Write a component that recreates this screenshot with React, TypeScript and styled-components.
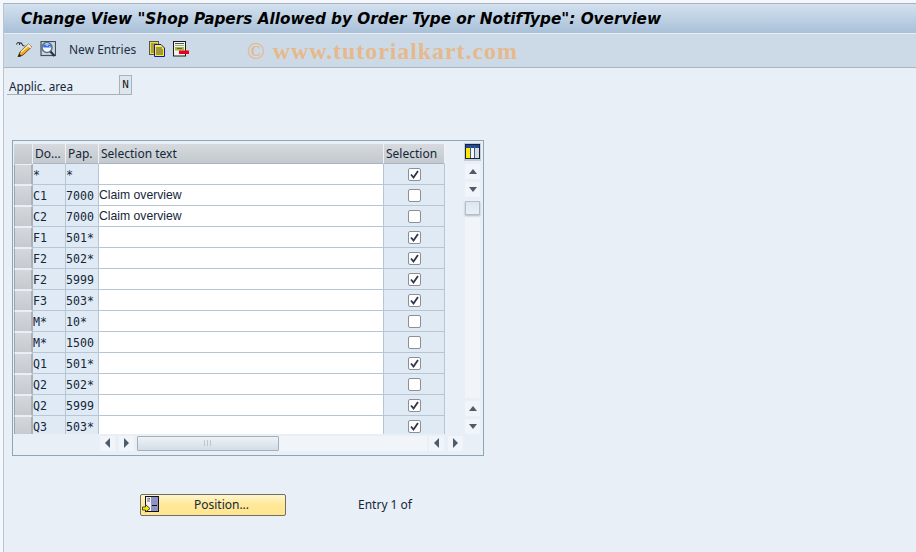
import React from "react";
import styled, { createGlobalStyle } from "styled-components";

const Global = createGlobalStyle`
  html, body { margin: 0; padding: 0; background: #e8eff7; }
  #root { width: 916px; height: 552px; overflow: hidden; }
`;
const uiFont = `"Noto Sans", "Open Sans", sans-serif`;
const monoFont = `"DejaVu Sans Mono", monospace`;

const Page = styled.div`
  width: 916px; height: 552px; box-sizing: border-box; position: relative;
  padding: 3px 0 0 3px; background: #f4f7fb; overflow: hidden;
`;
const Window = styled.div`
  height: 549px; box-sizing: border-box; border-top: 1px solid #a9b2bc; border-left: 1px solid #b9c4cf;
  background: #e8eff7; display: flex; flex-direction: column;
`;
const TitleBar = styled.div`
  height: 30px; box-sizing: border-box; padding: 0 0 0 17px;
  background: linear-gradient(#d3e1ef, #a9c0d8);
  border-bottom: 1px solid #e6edf4;
  display: flex; align-items: center;
`;
const Title = styled.h1`
  margin: 0; font: italic bold 15.28px "DejaVu Sans", sans-serif; color: #000; white-space: nowrap;
`;
const Toolbar = styled.div`
  height: 34px; box-sizing: border-box; background: #ccdae7; border-bottom: 1px solid #a9b5c1;
  display: flex; align-items: center; padding: 0 0 3px 12px; position: relative;
`;
const ToolIcon = styled.span<{ $mr: number }>`
  width: 16px; height: 16px; display: inline-flex; margin-right: ${p => p.$mr}px;
`;
const ToolText = styled.span`
  font: 12px ${uiFont}; color: #1c2e42; margin-right: 13px;
`;
const Watermark = styled.div`
  position: absolute; left: 243px; top: 4px; font: bold 24px "Liberation Serif", serif;
  letter-spacing: 0.92px; color: #e6b98c; white-space: nowrap;
`;
const Body = styled.div`
  flex: 1; display: flex; flex-direction: column; align-items: flex-start; padding: 7px 0 0 3px;
`;
const FieldRow = styled.div`display: flex; height: 20px;`;
const FieldLabel = styled.div`
  width: 112px; box-sizing: border-box; padding: 3px 0 0 2px; border-bottom: 1px solid #a8b0b8;
  font: 11.7px ${uiFont}; color: #14263a;
`;
const FieldValue = styled.div`
  width: 13px; box-sizing: border-box; border: 1px solid #a8b0b8; background: #dde6ee;
  font: 11px ${monoFont}; color: #222; text-align: center; line-height: 18px;
`;
const TableBox = styled.div`
  margin: 45px 0 0 5px; width: 472px; height: 316px; box-sizing: border-box;
  border: 1px solid #8ea5b8; display: grid; grid-template-columns: 449px 19px; grid-template-rows: 290px 21px;
  padding: 3px 0 0 1px; background: #e8eff7;
`;
const Grid = styled.div`
  display: grid; grid-template-columns: 19px 33px 33px 285px 61px; grid-auto-rows: 21px; overflow: hidden;
  width: 431px; align-content: start;
`;
const Corner = styled.div`
  background: linear-gradient(#d2d6da, #c2c7cc); border-right: 1px solid #e8eff7; height: 20px;
`;
const Head = styled.div`
  height: 20px; box-sizing: border-box; background: linear-gradient(#d6dade, #c3c9ce);
  border-right: 1px solid #eef2f6; border-bottom: 1px solid #a8b5c1;
  font: 12px ${uiFont}; color: #14263a; padding-left: 2px; line-height: 20px; white-space: nowrap;
`;
const RowSel = styled.div`
  box-sizing: border-box; background: linear-gradient(#d4d8dc, #c6cacf);
  border: 1px solid #e8eff7; border-left: 1px solid #9aa5b0; border-right: 2px solid #a9b2bb; margin-top: -1px; height: 21px;
`;
const Cell = styled.div<{ $kind: "key" | "text" | "check" }>`
  box-sizing: border-box; height: 21px; overflow: hidden; white-space: nowrap;
  background: ${p => (p.$kind === "text" ? "#ffffff" : "#dfeaf4")};
  border-right: 1px solid #b7c6d4; border-bottom: 1px solid #b7c6d4; margin-top: -1px;
  font: ${p => (p.$kind === "text" ? `12.2px "Liberation Sans", sans-serif` : `11.6px ${monoFont}`)};
  line-height: ${p => (p.$kind === "text" ? 21 : 22)}px; color: #14263a;
  ${p => p.$kind === "check" && "display: flex; align-items: center; justify-content: center;"}
`;
const Check = styled.span`
  width: 13px; height: 13px; box-sizing: border-box; border: 1px solid #8d8f92; border-radius: 2px;
  background: #fff; display: inline-flex; align-items: center; justify-content: center;
`;
const VScroll = styled.div`
  display: flex; flex-direction: column; align-items: center; width: 17px; margin-left: 1px; margin-top: -1px;
`;
const ConfigBtn = styled.div`
  width: 17px; height: 18px; box-sizing: border-box; margin-bottom: 3px; display: flex;
`;
const ArrowBtn = styled.div`
  width: 15px; height: 15px; flex: none; background: #f1f5f9; display: flex; align-items: center; justify-content: center;
`;
const VTrack = styled.div`
  flex: 1; width: 15px; background: #f1f5f9; margin: 3px 0; display: flex; flex-direction: column;
`;
const VThumb = styled.div`
  height: 14px; margin-top: 1px; box-sizing: border-box; border: 1px solid #b1bfcc; background: linear-gradient(#dde6ef, #e9eff5);
  box-shadow: 0 1px 2px #aab6c2;
`;
const Gap = styled.div`height: 3px; flex: none;`;
const HScroll = styled.div`
  display: flex; align-items: center; grid-column: 1 / span 2; padding-left: 86px; height: 18px; gap: 0;
`;
const HTrack = styled.div`
  width: 290px; height: 15px; margin: 0 2px 0 3px; background: #f1f5f9; display: flex;
`;
const HThumb = styled.div`
  width: 142px; height: 15px; box-sizing: border-box; border: 1px solid #a3b0bc; border-radius: 1px;
  background: linear-gradient(#eef2f6, #d3dde6); display: flex; align-items: center; justify-content: center;
`;
const HGap = styled.div`width: 4px; flex: none;`;
const Footer = styled.div`
  display: flex; align-items: center; margin: 38px 0 0 133px;
`;
const PosButton = styled.button`
  width: 146px; height: 22px; box-sizing: border-box; padding: 0; border: 1px solid #6e6e64; border-radius: 2px;
  background: linear-gradient(#fff6cf, #ffe89a 45%, #ffe58f); position: relative; display: block;
  font: 12px ${uiFont}; color: #14263a; text-align: center; padding-left: 17px; line-height: 20px;
`;
const PosIcon = styled.span`position: absolute; left: 1px; top: 0; width: 18px; height: 18px; display: flex;`;
const EntryText = styled.span`font: 12px ${uiFont}; color: #14263a; margin-left: 72px; padding-bottom: 2px;`;

const rows: [string, string, string, boolean][] = [
  ["*", "*", "", true],
  ["C1", "7000", "Claim overview", false],
  ["C2", "7000", "Claim overview", false],
  ["F1", "501*", "", true],
  ["F2", "502*", "", true],
  ["F2", "5999", "", true],
  ["F3", "503*", "", true],
  ["M*", "10*", "", false],
  ["M*", "1500", "", false],
  ["Q1", "501*", "", true],
  ["Q2", "502*", "", false],
  ["Q2", "5999", "", true],
  ["Q3", "503*", "", true],
];

const Tick = () => (
  <svg width="11" height="11" viewBox="0 0 11 11"><path d="M2 5.5 L4.5 8.5 L9 2" fill="none" stroke="#2e3550" strokeWidth="1.8" /></svg>
);
const Arrow = ({ d }: { d: "up" | "down" | "left" | "right" }) => {
  const pts = { up: "1,6 9,6 5,1", down: "1,1 9,1 5,6", left: "6,0 6,10 1,5", right: "1,0 1,10 6,5" }[d];
  const w = d === "up" || d === "down" ? 10 : 7;
  const h = d === "up" || d === "down" ? 7 : 10;
  return <svg width={w} height={h} viewBox={`0 0 ${w} ${h}`}><polygon points={pts} fill="#4d5c6c" /></svg>;
};
const GlassesPencil = () => (
  <svg width="16" height="16" viewBox="0 0 16 16">
    <path d="M0.5 3.5 Q1.5 0.5 3.5 2 L3.5 4 M3.5 2.5 Q5 1 6 3 Q7 5.5 8.5 4.5" fill="none" stroke="#333" strokeWidth="1.1" />
    <path d="M4 11 L12.5 3 L15.5 6 L7 14 L2 16 Z" fill="#f6a821" stroke="#5a3a10" strokeWidth="0.9" />
    <path d="M5 11 L12.5 4.5" stroke="#fff3b0" strokeWidth="1.2" />
    <path d="M12.5 3 L15.5 6 L14.2 7.2 L11.2 4.2 Z" fill="#f4f4f4" />
    <path d="M2 16 L3.2 12.6 L5.6 15 Z" fill="#222" />
  </svg>
);
const FindIcon = () => (
  <svg width="16" height="16" viewBox="0 0 16 16">
    <rect x="1" y="0.5" width="14.5" height="14" fill="#cfd8e2" stroke="#3f5164" strokeWidth="1.2" />
    <circle cx="7" cy="6.5" r="5" fill="#f4f8ff" stroke="#5d6f80" strokeWidth="1.5" />
    <path d="M3.2 3.5 H10.8 V6.5 H3.2 Z" fill="#2f6fe0" />
    <path d="M6 4.5 H8 M9 5.5 H10" stroke="#a8c8f8" />
    <path d="M10.5 10.5 L14.5 15" stroke="#26323e" strokeWidth="2.2" />
  </svg>
);
const CopyIcon = () => (
  <svg width="16" height="16" viewBox="0 0 16 16">
    <rect x="0.5" y="0.5" width="9" height="13" fill="#e8dc5a" stroke="#55554a" />
    <path d="M2 3 H8 M2 5 H8 M2 7 H8 M2 9 H8 M2 11 H8" stroke="#6a6420" />
    <path d="M5.5 3.5 H12 L15.5 7 V15.5 H5.5 Z" fill="#ffee30" stroke="#0a1ab0" />
    <path d="M7 7 H13 M7 9 H14 M7 11 H14 M7 13 H14" stroke="#444" />
  </svg>
);
const DeleteIcon = () => (
  <svg width="16" height="16" viewBox="0 0 16 16">
    <rect x="0.5" y="0.5" width="12" height="14.5" fill="#f2f4ee" stroke="#1a1a1a" />
    <path d="M2 2.5 H11" stroke="#555" />
    <path d="M2 4.5 H11" stroke="#9aa29a" />
    <rect x="2" y="6" width="9" height="3.5" fill="#a4b83c" />
    <path d="M4 7.5 H9" stroke="#5d6f20" />
    <rect x="6" y="9.5" width="10" height="3.5" fill="#e8001c" />
  </svg>
);
const PositionIcon = () => (
  <svg width="18" height="18" viewBox="0 0 18 18">
    <rect x="3.5" y="1.5" width="13" height="15" fill="#eef0f6" stroke="#111" />
    <rect x="9" y="2" width="7" height="14" fill="#8e93c4" />
    <path d="M10 10.5 H15" stroke="#111" />
    <path d="M5 4 H8 L6.5 2.8 M5 6 H8" stroke="#666" fill="none" />
    <path d="M0.5 12 H3.5 V9.5 L8 13.5 L3.5 17 V15 H0.5 Z" fill="#ffe600" stroke="#222" strokeWidth="0.8" />
  </svg>
);
const ConfigIcon = () => (
  <svg width="17" height="18" viewBox="0 0 17 18">
    <rect x="0" y="0" width="17" height="18" fill="#c5ccd3" />
    <rect x="1.5" y="1.5" width="14" height="14" fill="#f4f6f8" stroke="#14243a" />
    <rect x="2" y="2" width="13" height="3" fill="#22489a" />
    <rect x="2" y="5" width="4" height="10" fill="#ffe800" />
    <path d="M6.5 3 V15 M10.5 3 V15" stroke="#3b5a9a" />
    <rect x="11" y="5" width="4" height="10" fill="#d5dae0" />
  </svg>
);
const Grip = () => (
  <svg width="10" height="7" viewBox="0 0 10 7">
    <path d="M1 1 H2 M4 1 H5 M7 1 H8 M1 3 H2 M4 3 H5 M7 3 H8 M1 5 H2 M4 5 H5 M7 5 H8" stroke="#9aa6b2" />
  </svg>
);

export default function App() {
  return (
    <Page>
      <Global />
      <Window>
        <TitleBar>
          <Title>Change View "Shop Papers Allowed by Order Type or NotifType": Overview</Title>
        </TitleBar>
        <Toolbar>
          <ToolIcon $mr={8}><GlassesPencil /></ToolIcon>
          <ToolIcon $mr={13}><FindIcon /></ToolIcon>
          <ToolText>New Entries</ToolText>
          <ToolIcon $mr={8}><CopyIcon /></ToolIcon>
          <ToolIcon $mr={0}><DeleteIcon /></ToolIcon>
          <Watermark>© www.tutorialkart.com</Watermark>
        </Toolbar>
        <Body>
          <FieldRow>
            <FieldLabel>Applic. area</FieldLabel>
            <FieldValue>N</FieldValue>
          </FieldRow>
          <TableBox>
            <Grid>
              <Corner />
              <Head>Do...</Head>
              <Head>Pap.</Head>
              <Head>Selection text</Head>
              <Head>Selection</Head>
              {rows.map((r, i) => (
                <React.Fragment key={i}>
                  <RowSel />
                  <Cell $kind="key">{r[0]}</Cell>
                  <Cell $kind="key">{r[1]}</Cell>
                  <Cell $kind="text">{r[2]}</Cell>
                  <Cell $kind="check"><Check>{r[3] && <Tick />}</Check></Cell>
                </React.Fragment>
              ))}
            </Grid>
            <VScroll>
              <ConfigBtn><ConfigIcon /></ConfigBtn>
              <ArrowBtn><Arrow d="up" /></ArrowBtn>
              <Gap />
              <ArrowBtn><Arrow d="down" /></ArrowBtn>
              <VTrack><VThumb /></VTrack>
              <ArrowBtn><Arrow d="up" /></ArrowBtn>
              <Gap />
              <ArrowBtn><Arrow d="down" /></ArrowBtn>
            </VScroll>
            <HScroll>
              <ArrowBtn><Arrow d="left" /></ArrowBtn>
              <HGap />
              <ArrowBtn><Arrow d="right" /></ArrowBtn>
              <HTrack><HThumb><Grip /></HThumb></HTrack>
              <ArrowBtn><Arrow d="left" /></ArrowBtn>
              <HGap />
              <ArrowBtn><Arrow d="right" /></ArrowBtn>
            </HScroll>
          </TableBox>
          <Footer>
            <PosButton><PosIcon><PositionIcon /></PosIcon>Position...</PosButton>
            <EntryText>Entry 1 of</EntryText>
          </Footer>
        </Body>
      </Window>
    </Page>
  );
}
